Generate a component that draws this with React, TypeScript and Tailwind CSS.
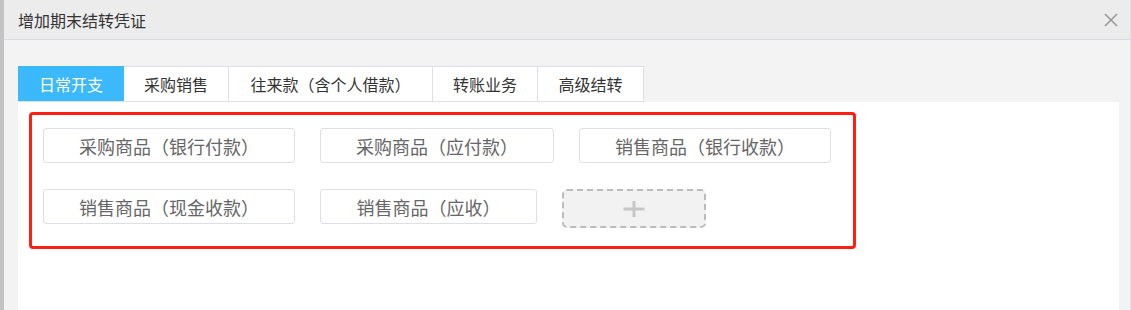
import React from "react";

const tabs: { label: string; w: string }[] = [
  { label: "日常开支", w: "w-[106px]" },
  { label: "采购销售", w: "w-[105px]" },
  { label: "往来款（含个人借款）", w: "w-[204px]" },
  { label: "转账业务", w: "w-[105px]" },
  { label: "高级结转", w: "w-[106px]" },
];

const rows: { label: string; w: string }[][] = [
  [
    { label: "采购商品（银行付款）", w: "w-[252px]" },
    { label: "采购商品（应付款）", w: "w-[234px]" },
    { label: "销售商品（银行收款）", w: "w-[252px]" },
  ],
  [
    { label: "销售商品（现金收款）", w: "w-[252px]" },
    { label: "销售商品（应收）", w: "w-[217px]" },
  ],
];

function ItemButton({ label, w }: { label: string; w: string }) {
  return (
    <div
      className={`${w} h-[35px] flex items-center justify-center rounded-[3px] border border-[#dcdfe6] bg-white text-[18px] leading-none text-[#666]`}
    >
      {label}
    </div>
  );
}

function AddButton() {
  return (
    <div className="w-[144px] h-[39px] flex items-center justify-center rounded-[5px] border-2 border-dashed border-[#bbbbbb] bg-[#f2f2f2]">
      <svg width="22" height="18" viewBox="0 0 22 18">
        <path d="M0.5 9H21.5M11 1V17" stroke="#c6c6c6" strokeWidth="3" />
      </svg>
    </div>
  );
}

export default function App() {
  return (
    <div
      className="w-[1131px] h-[310px] flex bg-[#c3c3c3] overflow-hidden"
      style={{ fontFamily: '"Noto Sans CJK SC", "Noto Sans", sans-serif' }}
    >
      <div className="ml-[4px] flex-1 flex flex-col border-r border-[#dedfe8]">
        <div className="h-[40px] shrink-0 flex items-center justify-between bg-[#ececec] border-b border-[#d8d9e0] pl-[14px] pr-[12px]">
          <span className="text-[16px] leading-none text-[#333]">增加期末结转凭证</span>
          <svg width="14" height="14" viewBox="0 0 14 14">
            <path d="M1 1L13 13M13 1L1 13" stroke="#9a9a9a" strokeWidth="1.6" />
          </svg>
        </div>
        <div className="flex-1 flex flex-col bg-[#f3f3f3] pt-[26px] pl-[14px] pr-[11px]">
          <div className="flex h-[36px] shrink-0">
            {tabs.map((t, i) => (
              <div
                key={t.label}
                className={
                  i === 0
                    ? `${t.w} flex items-center justify-center bg-[#3cb8fc] text-white text-[16px] leading-none border-b border-[#dcdfe6]`
                    : `${t.w} flex items-center justify-center bg-white text-[#333] text-[16px] leading-none border-y border-r border-[#dcdfe6]`
                }
              >
                {t.label}
              </div>
            ))}
          </div>
          <div className="flex-1 bg-white pt-[10px] pl-[11px]">
            <div className="w-[827px] h-[137px] rounded-[4px] border-[3px] border-[#ff1f10] pt-[13px] pl-[11px] flex flex-col gap-[26px]">
              {rows.map((row, ri) => (
                <div key={ri} className="flex items-start gap-[25px]">
                  {row.map((b) => (
                    <ItemButton key={b.label} label={b.label} w={b.w} />
                  ))}
                  {ri === 1 && <AddButton />}
                </div>
              ))}
            </div>
          </div>
        </div>
      </div>
    </div>
  );
}
